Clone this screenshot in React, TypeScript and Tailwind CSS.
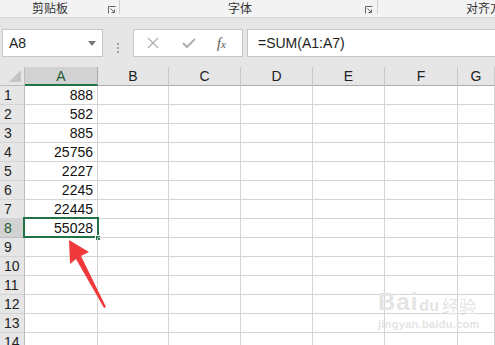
import React from 'react';

const values = ['888', '582', '885', '25756', '2227', '2245', '22445', '55028'];
const cols = ['A', 'B', 'C', 'D', 'E', 'F', 'G'];
const rows = Array.from({ length: 14 }, (_, i) => i + 1);

const cellFont = { fontFamily: '"Liberation Sans", Arial, sans-serif' };
const cjk = { fontFamily: '"Noto Sans CJK SC", "Noto Sans", sans-serif' };

function Launcher() {
  return (
    <svg width="8" height="8" viewBox="0 0 8 8" className="text-[#666]">
      <path d="M0.5 7.5V0.5H7.5" fill="none" stroke="currentColor" strokeWidth="1" />
      <path d="M2.5 2.5L6.5 6.5M6.5 3.5V6.5H3.5" fill="none" stroke="currentColor" strokeWidth="1" />
    </svg>
  );
}

export default function App() {
  return (
    <div className="relative w-[495px] h-[345px] overflow-hidden bg-white" style={cellFont}>
      {/* Ribbon group labels */}
      <div className="flex h-[18px] bg-[#f3f3f3] border-b border-[#d6d6d6] text-[12px] text-[#333] overflow-hidden" style={cjk}>
        <div className="relative w-[120px] shrink-0 pl-[32px] pt-[1px] leading-[14px]">
          <span>剪贴板</span>
          <div className="absolute left-[108px] top-[6px]"><Launcher /></div>
          <div className="absolute right-0 top-0 h-[14px] w-px bg-[#d0d0d0]" />
        </div>
        <div className="relative w-[258px] shrink-0 pl-[108px] pt-[1px] leading-[14px]">
          <span>字体</span>
          <div className="absolute left-[245px] top-[6px]"><Launcher /></div>
          <div className="absolute right-0 top-0 h-[14px] w-px bg-[#d0d0d0]" />
        </div>
        <div className="flex-1 pl-[88px] pt-[1px] leading-[14px] whitespace-nowrap">对齐方式</div>
      </div>

      {/* Formula bar */}
      <div className="flex h-[49px] bg-[#e6e6e6] pt-[11px] pl-[2px]">
        <div className="flex items-center w-[101px] h-[28px] bg-white border border-[#c6c6c6] pl-[6px] pr-[6px] text-[14px] text-[#222]">
          <span className="flex-1">A8</span>
          <span className="w-0 h-0 border-l-[4px] border-r-[4px] border-t-[5px] border-l-transparent border-r-transparent border-t-[#777]" />
        </div>
        <div className="w-[30px] flex flex-col items-center justify-center gap-[2px]">
          <span className="w-[2px] h-[2px] bg-[#a0a0a0]" />
          <span className="w-[2px] h-[2px] bg-[#a0a0a0]" />
          <span className="w-[2px] h-[2px] bg-[#a0a0a0]" />
        </div>
        <div className="flex items-center w-[110px] h-[28px] bg-white border border-[#c6c6c6]">
          <svg width="14" height="14" viewBox="0 0 14 14" className="ml-[12px]">
            <path d="M2 2L12 12M12 2L2 12" stroke="#b0b0b0" strokeWidth="1.3" />
          </svg>
          <svg width="16" height="14" viewBox="0 0 16 14" className="ml-[21px]">
            <path d="M2 7L6 11L14 3" fill="none" stroke="#b0b0b0" strokeWidth="2" />
          </svg>
          <span className="ml-[20px] text-[14px] italic text-[#555]" style={{ fontFamily: '"Liberation Serif", serif' }}>
            f<span className="text-[11px]">x</span>
          </span>
        </div>
        <div className="ml-[4px] flex-1 h-[28px] bg-white border border-r-0 border-[#c6c6c6] flex items-center pl-[10px] text-[14px] text-[#222]">
          =SUM(A1:A7)
        </div>
      </div>

      {/* Grid */}
      <div className="grid grid-cols-[25px_73px_71px_72px_72px_72px_73px_1fr] auto-rows-[19px] text-[14px]">
        {/* header row */}
        <div className="relative bg-[#e6e6e6] border-r border-b border-[#bdbdbd]">
          <div
            className="absolute right-[3px] bottom-[3px] w-0 h-0"
            style={{ borderBottom: '12px solid #c4c4c4', borderLeft: '12px solid transparent' }}
          />
        </div>
        {cols.map((c) => (
          <div
            key={c}
            className={
              c === 'A'
                ? 'flex items-center justify-center bg-[#d2d2d2] border-r border-[#ababab] border-b-2 border-b-[#217346] text-[#1e5c34] leading-none'
                : 'flex items-center justify-center bg-[#e6e6e6] border-r border-b border-[#ababab] border-r-[#c8c8c8] text-[#222] leading-none'
            }
          >
            {c}
          </div>
        ))}

        {rows.map((r) => (
          <React.Fragment key={r}>
            <div
              className={
                r === 8
                  ? 'flex items-center pl-[4px] bg-[#d2d2d2] border-r border-b border-[#bdbdbd] text-[#1e5c34] leading-none'
                  : 'flex items-center pl-[4px] bg-[#e6e6e6] border-r border-b border-[#bdbdbd] border-b-[#d4d4d4] text-[#222] leading-none'
              }
            >
              {r}
            </div>
            {cols.map((c) => (
              <div
                key={c}
                className="relative flex items-center justify-end pr-[4px] border-r border-b border-[#d4d4d4] text-[#111] leading-none"
              >
                {c === 'A' && r <= 8 ? values[r - 1] : ''}
                {c === 'A' && r === 8 && (
                  <>
                    <div className="absolute left-[-2px] top-[-2px] right-[-2px] bottom-[-1px] border-2 border-[#217346]" />
                    <div className="absolute right-[-4px] bottom-[-4px] w-[6px] h-[6px] bg-[#217346] border border-white" />
                  </>
                )}
              </div>
            ))}
          </React.Fragment>
        ))}
      </div>

      {/* red arrow */}
      <svg className="absolute left-0 top-0 pointer-events-none" width="495" height="345">
        <polygon points="69,240 89,252 81,256 106,307 104,308 76,259 70,264" fill="#f0393b" />
      </svg>

      {/* watermark */}
      <div className="absolute left-[378px] top-[290px] pointer-events-none text-[#e4e4e4]">
        <div className="flex items-end leading-none">
          <span className="text-[24px] font-bold tracking-[1px]" style={cellFont}>Bai</span>
          <span className="text-[16px] font-bold ml-[1px]" style={cellFont}>du</span>
          <span className="text-[17px] ml-[3px]" style={cjk}>经验</span>
        </div>
        <div className="mt-[5px] text-[11px] font-bold tracking-[0.3px] leading-none" style={cellFont}>jingyan.baidu.com</div>
      </div>
    </div>
  );
}
